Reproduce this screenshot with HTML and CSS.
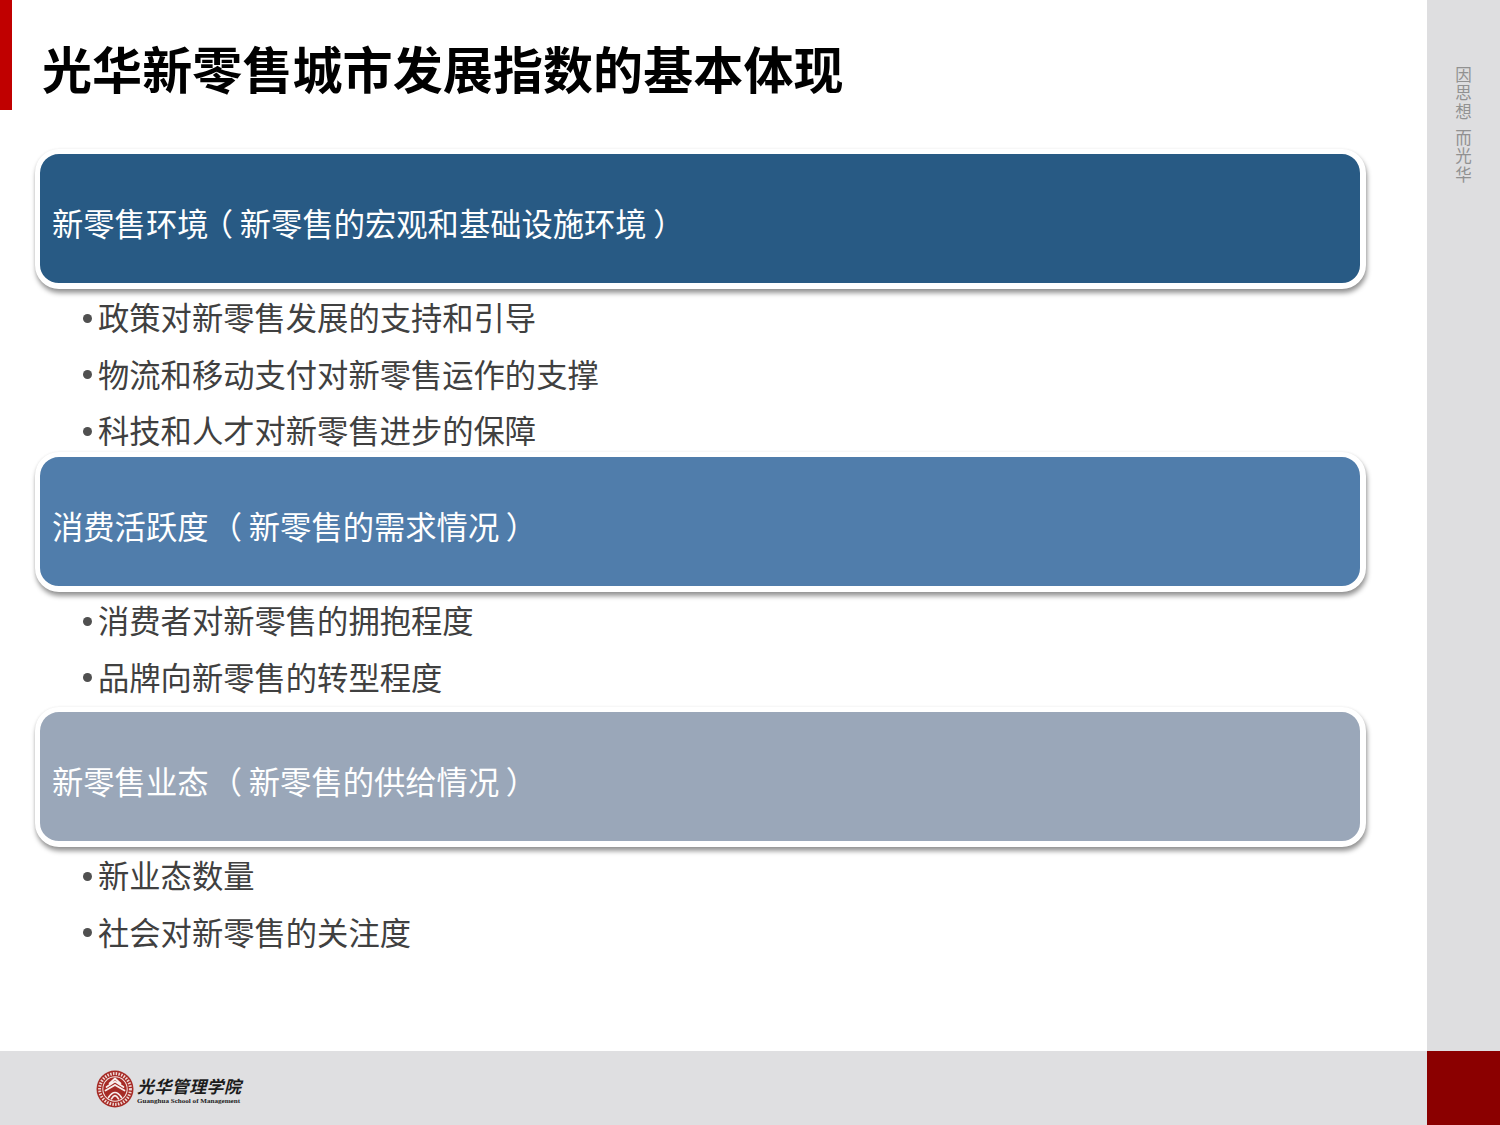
FILE: index.html
```html
<!DOCTYPE html>
<html lang="zh-CN">
<head>
<meta charset="utf-8">
<title>光华新零售城市发展指数的基本体现</title>
<link rel="stylesheet" href="styles.css">
</head>
<body>
<div class="slide">
  <div class="upper">
    <main class="main">
      <header class="header">
        <div class="accent"></div>
        <h1 class="title">光华新零售城市发展指数的基本体现</h1>
      </header>
      <section class="group group-a">
        <div class="band band-dark"><span>新零售环境<span class="paren">（</span>新零售的宏观和基础设施环境<span class="paren">）</span></span></div>
        <ul class="list">
          <li>政策对新零售发展的支持和引导</li>
          <li>物流和移动支付对新零售运作的支撑</li>
          <li>科技和人才对新零售进步的保障</li>
        </ul>
      </section>
      <section class="group group-b">
        <div class="band band-mid"><span>消费活跃度 <span class="paren">（</span>新零售的需求情况<span class="paren">）</span></span></div>
        <ul class="list">
          <li>消费者对新零售的拥抱程度</li>
          <li>品牌向新零售的转型程度</li>
        </ul>
      </section>
      <section class="group">
        <div class="band band-light"><span>新零售业态 <span class="paren">（</span>新零售的供给情况<span class="paren">）</span></span></div>
        <ul class="list">
          <li>新业态数量</li>
          <li>社会对新零售的关注度</li>
        </ul>
      </section>
    </main>
    <aside class="side"><span class="motto">因思想 而光华</span></aside>
  </div>
  <footer class="footer">
    <div class="logo">
      <svg class="seal" width="38" height="38" viewBox="0 0 38 38" aria-hidden="true">
        <circle cx="19" cy="19" r="18.5" fill="#a62b26"/>
        <circle cx="19" cy="19" r="15.4" fill="none" stroke="#f0d9d6" stroke-width="3" stroke-dasharray="1.5 1.3"/>
        <circle cx="19" cy="19" r="12.7" fill="#f4e6e3"/>
        <circle cx="19" cy="19" r="11.7" fill="#a62b26"/>
        <path d="M19 8.5 L13.5 13.5 M19 8.5 L24.5 13.5 M19 11.5 L10.5 17 M19 11.5 L27.5 17 M19 15 L9.5 20.5 M19 15 L28.5 20.5 M12.5 27.5 Q19 17.5 25.500 27.500 M15.500 28.800 Q19 22.500 22.500 28.800" fill="none" stroke="#f8eeec" stroke-width="1.7" stroke-linecap="round"/>
      </svg>
      <div class="logo-text">
        <div class="logo-cn">光华管理学院</div>
        <div class="logo-en">Guanghua School of Management</div>
      </div>
    </div>
    <div class="corner"></div>
  </footer>
</div>
</body>
</html>
```
FILE: styles.css
```css
* { box-sizing: border-box; }
html, body { margin: 0; padding: 0; }
body { background: #fff; }
.slide {
  width: 1500px;
  height: 1125px;
  display: flex;
  flex-direction: column;
  overflow: hidden;
  font-family: "Noto Sans CJK SC", "Noto Sans", sans-serif;
}
.upper { flex: 0 0 1051px; display: flex; }
.main { flex: 1; min-width: 0; }
.side {
  flex: 0 0 73px;
  background: #dedee0;
  display: flex;
  justify-content: center;
  padding-top: 66px;
}
.motto {
  writing-mode: vertical-rl;
  font-size: 16.5px;
  line-height: 18px;
  letter-spacing: 2.2px;
  word-spacing: 1px;
  color: #919191;
  height: 125px;
  white-space: nowrap;
}
.header { height: 149px; display: flex; align-items: flex-start; }
.accent { flex: 0 0 12px; height: 110px; background: #c00000; }
.title {
  margin: 30px 0 0 30px;
  font-size: 50px;
  line-height: 74px;
  letter-spacing: .1px;
  font-weight: 700;
  color: #000;
  white-space: nowrap;
}
.group-a { height: 303px; }
.group-b { height: 255px; }
.band {
  position: relative;
  z-index: 1;
  width: 1331px;
  height: 140px;
  margin-left: 35px;
  padding: 9px 0 0 12px;
  display: flex;
  align-items: center;
  border: 5px solid #fff;
  border-right-width: 6px;
  border-bottom-width: 6px;
  border-radius: 24px;
  box-shadow: 1px 4px 5px rgba(0, 0, 0, .42), 0 0 3px rgba(0, 0, 0, .06);
  color: #fff;
  font-size: 31.3px;
  line-height: 40px;
  word-spacing: 2px;
  white-space: pre;
}
.band-dark { background: #285a84; }
.band-mid { background: #507dab; }
.band-light { background: #9aa7b9; }
.paren {
  display: inline-block;
  width: 31.3px;
  text-align: center;
  font-feature-settings: "palt";
}
.list {
  list-style: none;
  margin: 0;
  padding: 0 0 0 83px;
  font-size: 31.3px;
  line-height: 56.5px;
  color: #404040;
}
.list li { display: flex; align-items: center; gap: 6px; white-space: nowrap; }
.list li::before {
  content: "";
  flex: 0 0 9px;
  height: 9px;
  margin-top: 2px;
  border-radius: 50%;
  background: #505050;
}
.footer {
  flex: 1;
  display: flex;
  justify-content: space-between;
  background: #dfdfe1;
}
.logo { display: flex; align-items: center; gap: 3px; padding: 0 0 0 96px; }
.seal { display: block; margin-top: 1px; }
.logo-text { margin-top: 3px; }
.logo-cn {
  font-weight: 700;
  font-size: 17px;
  line-height: 23px;
  letter-spacing: .4px;
  color: #1c1c1c;
  font-style: italic;
}
.logo-en {
  font-family: "Liberation Serif", serif;
  font-weight: 700;
  font-size: 7.1px;
  line-height: 9px;
  color: #222;
  white-space: nowrap;
}
.corner { flex: 0 0 73px; background: #8b0000; }
```
